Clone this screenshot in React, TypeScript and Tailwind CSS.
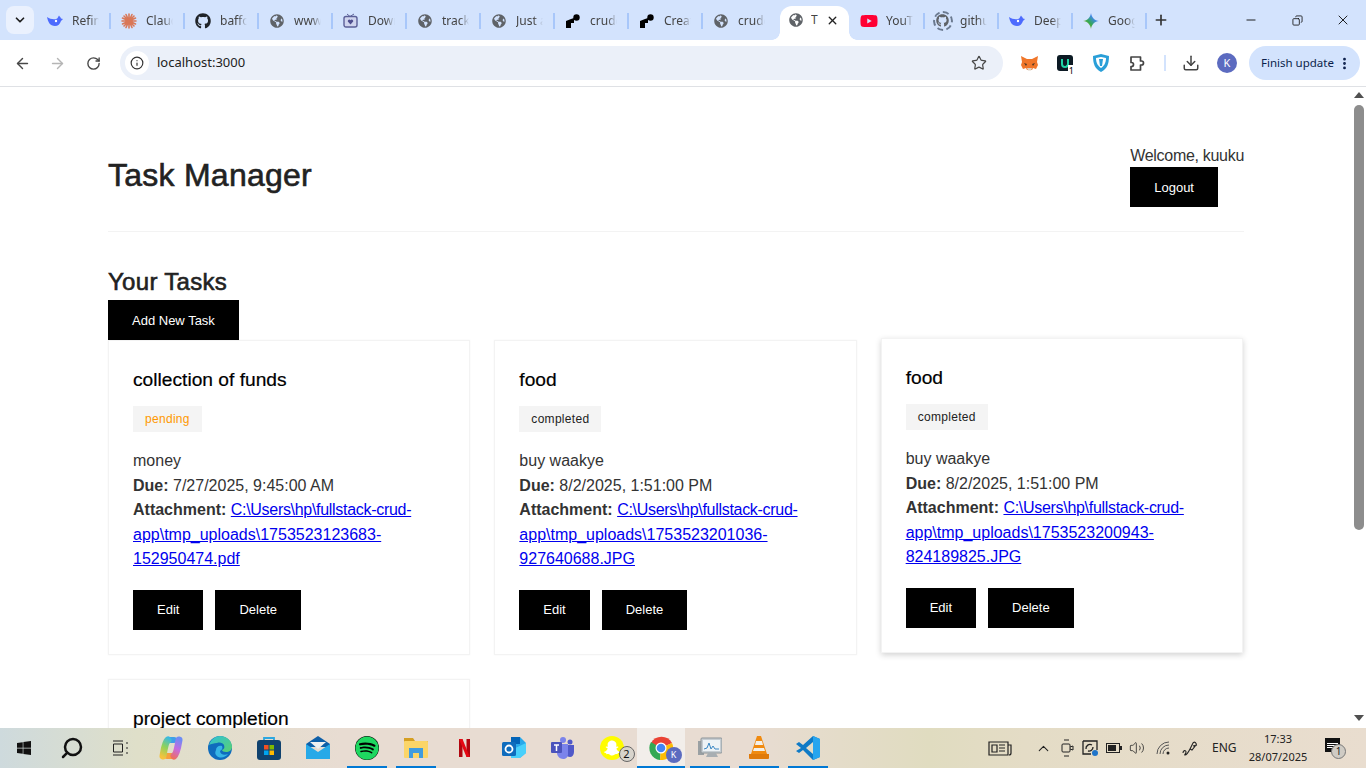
import {
  ArrowLeft,
  ArrowRight,
  ChevronDown,
  ChevronUp,
  Copy,
  Download,
  Info,
  Minus,
  MoreVertical,
  Plus,
  RotateCw,
  Search,
  Star,
  Volume2,
  X,
} from 'lucide-react'
import type { ReactNode } from 'react'
import { FaGithub, FaGlobeAmericas, FaSnapchatGhost, FaSpotify, FaWindows, FaYoutube } from 'react-icons/fa'

const Globe = () => <FaGlobeAmericas className="text-[#5f6368]" size={14} />

const Whale = () => (
  <svg width="17" height="14" viewBox="0 0 17 14">
    <path d="M1 3c1 5 3 9 8 9 3 0 5-2 6-5l2-2-2-.5c-.5-1.500-1.500-2-2-3-1 1-1 3-3 3.500C7 5.500 4 5 1 3z" fill="#4d6bfe" />
    <circle cx="10" cy="7" r="1.200" fill="#fff" />
  </svg>
)

const Claude = () => (
  <svg width="16" height="16" viewBox="0 0 16 16" stroke="#d97757" strokeWidth="1.600" strokeLinecap="round">
    <path d="M8 1v14M1 8h14M3 3l10 10M13 3L3 13M5 1.500l6 13M11 1.500l-6 13M1.500 5l13 6M14.500 5l-13 6" />
  </svg>
)

const TvIcon = () => (
  <svg width="15" height="15" viewBox="0 0 15 15">
    <path d="M4 1l3 2.500L11 1" stroke="#5b5f97" fill="none" />
    <rect x="1" y="3.500" width="13" height="10.500" rx="2" fill="#cfd4ee" stroke="#5b5f97" strokeWidth="1.400" />
    <path d="M7.500 11.500L4.800 8.500a1.500 1.500 0 0 1 2.700-1.200 1.500 1.500 0 0 1 2.700 1.200z" fill="#4f4f8f" />
  </svg>
)

const Crude = () => (
  <svg width="14" height="14" viewBox="0 0 14 14">
    <path d="M0 7l5-2v9H0z M5 5l3-1v5H5z" fill="#000" />
    <circle cx="10.500" cy="3.500" r="3.200" fill="#000" />
  </svg>
)

const GithubRing = () => (
  <span className="flex h-[20px] w-[20px] items-center justify-center rounded-full border-2 border-dashed border-[#6b7a90]">
    <FaGithub className="text-[#5f6368]" size={13} />
  </span>
)

const Gemini = () => (
  <svg width="16" height="16" viewBox="0 0 16 16">
    <defs>
      <linearGradient id="gem" x1="0" y1="1" x2="1" y2="0">
        <stop offset="0" stopColor="#f4b400" />
        <stop offset="0.4" stopColor="#34a853" />
        <stop offset="0.7" stopColor="#4285f4" />
        <stop offset="1" stopColor="#e8453c" />
      </linearGradient>
    </defs>
    <path d="M8 0c.6 4.500 3.500 7.400 8 8-4.500.6-7.400 3.500-8 8-.6-4.500-3.500-7.400-8-8 4.500-.6 7.400-3.500 8-8z" fill="url(#gem)" />
  </svg>
)

const tabs: { title: string; icon: ReactNode; active?: boolean }[] = [
  { title: 'Refine', icon: <Whale /> },
  { title: 'Claude', icon: <Claude /> },
  { title: 'baffour', icon: <FaGithub className="text-[#1f2328]" size={16} /> },
  { title: 'www.de', icon: <Globe /> },
  { title: 'Downlo', icon: <TvIcon /> },
  { title: 'tracking', icon: <Globe /> },
  { title: 'Just a m', icon: <Globe /> },
  { title: 'crude a', icon: <Crude /> },
  { title: 'Create', icon: <Crude /> },
  { title: 'crude a', icon: <Globe /> },
  { title: 'T', icon: <Globe />, active: true },
  { title: 'YouTube', icon: <FaYoutube className="text-[#ff0033]" size={18} /> },
  { title: 'github', icon: <GithubRing /> },
  { title: 'DeepSe', icon: <Whale /> },
  { title: 'Google', icon: <Gemini /> },
]

function TabStrip() {
  return (
    <div className="flex h-10 items-end bg-[#d3e3fd] font-['Noto_Sans',sans-serif]">
      <button className="mb-[6px] ml-[6px] flex h-7 w-7 items-center justify-center rounded-lg bg-[#eaf1fe]">
        <ChevronDown size={14} strokeWidth={3} className="text-[#1f1f1f]" />
      </button>
      <div className="ml-[3px] flex h-full items-center">
        {tabs.map((tab, i) =>
          tab.active ? (
            <div key={i} className="relative mx-[2px] flex h-[34px] w-[69px] items-center self-end rounded-t-xl bg-white pb-[6px] pl-[9px]">
              <span className="absolute bottom-0 left-[-8px] h-2 w-2 bg-[radial-gradient(circle_at_0_0,#d3e3fd_7.5px,#fff_8px)]" />
              <span className="absolute bottom-0 right-[-8px] h-2 w-2 bg-[radial-gradient(circle_at_100%_0,#d3e3fd_7.5px,#fff_8px)]" />
              <Globe />
              <span className="ml-2 w-[9px] overflow-hidden text-xs text-[#444]">{tab.title}</span>
              <X size={13} strokeWidth={2.5} className="ml-[6px] text-[#222]" />
            </div>
          ) : (
            <div key={i} className={`flex h-full w-[74px] items-center pt-[1px] ${i === 9 ? 'mr-[1px]' : ''}`}>
              <span className="flex w-[35px] shrink-0 justify-center">{tab.icon}</span>
              <span className="w-[27px] overflow-hidden whitespace-nowrap text-xs text-[#444] [mask-image:linear-gradient(90deg,#000_65%,transparent)]">
                {tab.title}
              </span>
              {i !== 9 && <span className="ml-auto h-4 w-[2px] bg-[#a8c7fa]" />}
            </div>
          ),
        )}
      </div>
      <div className="flex h-full items-center">
        <Plus size={16} strokeWidth={2.5} className="ml-[6px] text-[#333]" />
      </div>
      <div className="ml-auto flex h-full items-center text-[#111]">
        <span className="flex w-[46px] justify-center"><Minus size={14} strokeWidth={1.6} /></span>
        <span className="flex w-[46px] justify-center"><Copy size={11} strokeWidth={1.800} className="-scale-x-100" /></span>
        <span className="flex w-[46px] justify-center"><X size={16} strokeWidth={1.400} /></span>
      </div>
    </div>
  )
}

const Fox = () => (
  <svg width="17" height="16" viewBox="0 0 17 16">
    <path d="M0 1l6 3h5l6-3-1 6 1 3-2 4-3-1-1 2H6l-1-2-3 1-2-4 1-3z" fill="#f0762a" />
    <path d="M3 8l3 1-1 2zM14 8l-3 1 1 2z" fill="#4a3626" />
    <path d="M6 13h5l-1 2.500H7z" fill="#e0d2c4" />
  </svg>
)

const Shield = () => (
  <svg width="16" height="18" viewBox="0 0 16 18">
    <path d="M8 0l8 2c0 8-2 13-8 16C2 15 0 10 0 2z" fill="#2a9fd8" />
    <path d="M8 3l5 1c0 5-2 8-5 10C5 12 3 9 3 4z" fill="#fff" />
    <path d="M6 5h4l-1 7H7z" fill="#2a9fd8" />
  </svg>
)

const PuzzlePiece = () => (
  <svg className="ml-[20px]" width="17" height="17" viewBox="0 0 17 17" fill="none" stroke="#444" strokeWidth="1.700" strokeLinejoin="round">
    <path d="M2 2h9.500v4h1a2 2 0 0 1 0 4h-1v5H2v-3.500h.500a2 2 0 0 0 0-4H2z" />
  </svg>
)

function Toolbar() {
  return (
    <div className="flex h-[47px] shrink-0 items-center rounded-t-lg border-b border-[#dfe1e5] bg-white font-['Noto_Sans',sans-serif]">
      <ArrowLeft size={17} className="ml-[14px] text-[#474747]" />
      <ArrowRight size={17} className="ml-[18px] text-[#b5b5b5]" />
      <RotateCw size={15} strokeWidth={2.2} className="ml-[20px] text-[#474747]" />
      <div className="ml-[19px] flex h-[34px] w-[883px] items-center rounded-full bg-[#ebf0f9] pl-[5px]">
        <span className="flex h-6 w-6 items-center justify-center rounded-full bg-white">
          <Info size={14} strokeWidth={2} className="text-[#333]" />
        </span>
        <span className="ml-2 text-[13px] text-[#222]">localhost:3000</span>
        <Star size={16} strokeWidth={1.800} className="ml-auto mr-[16px] text-[#474747]" />
      </div>
      <div className="ml-[18px] flex w-[17px] justify-center"><Fox /></div>
      <div className="relative ml-[19px] flex h-4 w-4 items-center justify-center rounded-[3px] bg-[#0c1a24]">
        <span className="h-[9px] w-2 rounded-b-sm border-x-2 border-b-2 border-[#21d3a4]" />
        <span className="absolute -bottom-[5px] -right-[2px] bg-white px-[1px] text-[9px] leading-[11px] text-black">1</span>
      </div>
      <div className="ml-[20px] flex w-4 justify-center"><Shield /></div>
      <PuzzlePiece />
      <span className="ml-[18px] h-[16px] w-[2px] bg-[#d3e3fd]" />
      <Download size={18} strokeWidth={2} className="ml-[16px] text-[#444]" />
      <span className="ml-[17px] flex h-5 w-5 items-center justify-center rounded-full bg-[#5c6bc0] text-[11px] text-white">K</span>
      <div className="ml-[12px] flex h-[34px] w-[111px] items-center rounded-full bg-[#d3e3fd] pl-3 text-[11.5px] whitespace-nowrap text-[#0b1f4b]">
        Finish update
        <MoreVertical size={15} strokeWidth={2.500} className="ml-auto mr-2 text-[#0b1f4b]" />
      </div>
    </div>
  )
}

type Task = {
  title: string
  status: string
  description: string
  due: string
  path: string[]
  hovered?: boolean
}

const taskList: Task[] = [
  {
    title: 'collection of funds',
    status: 'pending',
    description: 'money',
    due: '7/27/2025, 9:45:00 AM',
    path: ['C:\\Users\\hp\\fullstack-crud-', 'app\\tmp_uploads\\1753523123683-152950474.pdf'],
  },
  {
    title: 'food',
    status: 'completed',
    description: 'buy waakye',
    due: '8/2/2025, 1:51:00 PM',
    path: ['C:\\Users\\hp\\fullstack-crud-', 'app\\tmp_uploads\\1753523201036-927640688.JPG'],
  },
  {
    title: 'food',
    status: 'completed',
    description: 'buy waakye',
    due: '8/2/2025, 1:51:00 PM',
    path: ['C:\\Users\\hp\\fullstack-crud-', 'app\\tmp_uploads\\1753523200943-824189825.JPG'],
    hovered: true,
  },
  {
    title: 'project completion',
    status: 'pending',
    description: 'finish the app',
    due: '7/30/2025, 5:00:00 PM',
    path: ['C:\\Users\\hp\\fullstack-crud-', 'app\\tmp_uploads\\1753523300000-100000000.pdf'],
  },
]

function ActionButton({ children }: { children: ReactNode }) {
  return <button className="h-10 bg-black px-6 pt-[1px] text-[13px] text-white">{children}</button>
}

function TaskCard({ task }: { task: Task }) {
  return (
    <div
      className={`border border-[#f3f3f3] bg-white p-6 ${
        task.hovered ? '-translate-y-0.5 shadow-[0_2px_6px_rgba(0,0,0,0.18)]' : 'shadow-[0_0_2px_rgba(0,0,0,0.04)]'
      }`}
    >
      <h3 className="text-[19.2px] leading-[29px] text-black [-webkit-text-stroke:0.2px_#000]">{task.title}</h3>
      <span
        className={`mt-[12px] inline-block h-[26px] bg-[#f4f4f4] px-3 text-xs leading-[26px] tracking-[0.3px] ${
          task.status === 'pending' ? 'text-[#ff9800]' : 'text-[#222]'
        }`}
      >
        {task.status}
      </span>
      <div className="mt-[17px] text-base leading-[24.5px] text-[#333]">
        <p>{task.description}</p>
        <p>
          <strong>Due:</strong> {task.due}
        </p>
        <p>
          <strong>Attachment:</strong>{' '}
          <a href="#" className="break-words text-[#0000ee] underline">
            <span className="tracking-[-0.3px]">{task.path[0]}</span>
            {task.path[1]}
          </a>
        </p>
      </div>
      <div className="mt-[18px] flex gap-3">
        <ActionButton>Edit</ActionButton>
        <ActionButton>Delete</ActionButton>
      </div>
    </div>
  )
}

function Page() {
  return (
    <div className="flex min-h-0 flex-1 overflow-hidden bg-white font-['Liberation_Sans',Arial,sans-serif] text-[#222]">
      <main className="min-w-0 flex-1 overflow-hidden pl-[108px] pr-[107px] pt-[56px]">
        <header className="flex items-center justify-between border-b border-[#f3f3f3] pb-6">
          <h1 className="text-[32px] leading-[40px] tracking-[0.25px] [-webkit-text-stroke:0.6px_#222]">Task Manager</h1>
          <div className="whitespace-nowrap leading-6">
            <p className="pt-[1px] leading-[23px] tracking-[-0.3px] text-[#333]">Welcome, kuuku</p>
            <ActionButton>Logout</ActionButton>
          </div>
        </header>
        <h2 className="mt-[32px] text-2xl leading-9 tracking-[0.3px] [-webkit-text-stroke:0.6px_#222]">Your Tasks</h2>
        <ActionButton>Add New Task</ActionButton>
        <div className="mr-[1px] grid grid-cols-3 items-start gap-6">
          {taskList.map((task, i) => (
            <TaskCard key={i} task={task} />
          ))}
        </div>
      </main>
      <div className="flex w-[15px] shrink-0 flex-col items-center bg-white pt-[5px]">
        <span className="h-0 w-0 border-x-[5px] border-b-[6px] border-x-transparent border-b-[#505050]" />
        <span className="mt-[7px] h-[425px] w-[10px] rounded-full bg-[#8d8d8d]" />
        <span className="mb-[7px] mt-auto h-0 w-0 border-x-[5px] border-t-[6px] border-x-transparent border-t-[#505050]" />
      </div>
    </div>
  )
}

const Copilot = () => (
  <svg width="26" height="24" viewBox="0 0 26 24" fill="none" strokeLinecap="round">
    <defs>
      <linearGradient id="cpa" gradientUnits="userSpaceOnUse" x1="14" y1="3" x2="4" y2="21">
        <stop offset="0" stopColor="#35b8e8" />
        <stop offset="0.5" stopColor="#8fd25a" />
        <stop offset="1" stopColor="#f6c23c" />
      </linearGradient>
      <linearGradient id="cpb" gradientUnits="userSpaceOnUse" x1="22" y1="3" x2="12" y2="21">
        <stop offset="0" stopColor="#6d8cf5" />
        <stop offset="0.5" stopColor="#c56be0" />
        <stop offset="1" stopColor="#f0705a" />
      </linearGradient>
    </defs>
    <path d="M10 4h6" stroke="#3f9fe8" strokeWidth="6" />
    <path d="M15 20h-6" stroke="#f6a03c" strokeWidth="6" />
    <path d="M10 4C7 6 6 14 5 20" stroke="url(#cpa)" strokeWidth="7" />
    <path d="M21 4c-1 6-2 14-5 16" stroke="url(#cpb)" strokeWidth="7" />
  </svg>
)

const Edge = () => (
  <svg width="24" height="24" viewBox="0 0 24 24">
    <defs>
      <linearGradient id="edg" x1="0" y1="0" x2="1" y2="1">
        <stop offset="0" stopColor="#2fc1d8" />
        <stop offset="1" stopColor="#5bd16f" />
      </linearGradient>
    </defs>
    <circle cx="12" cy="12" r="12" fill="#0f6cbd" />
    <path d="M1 9C3 3 8 0 12 0c7 0 12 5 12 11 0 3-3 5-6 5-2 0-4-1-4-2 2-1 3-2 2-5-1-2-4-3-7-2-3 0-6 1-8 2z" fill="url(#edg)" />
    <path d="M8 14c0-3 3-5 6-4 1 2 0 4-2 5 0 3 4 5 8 3-3 4-9 5-12 1-1-1-1-3 0-5z" fill="#36b5e5" />
  </svg>
)

const Store = () => (
  <svg width="24" height="24" viewBox="0 0 24 24">
    <path d="M7 5V2h10v3" fill="none" stroke="#2ba7e0" strokeWidth="1.800" />
    <rect y="4" width="24" height="20" rx="3" fill="#10426f" />
    <rect x="7" y="9" width="4.500" height="4.500" fill="#f25022" />
    <rect x="12.500" y="9" width="4.500" height="4.500" fill="#7fba00" />
    <rect x="7" y="14.500" width="4.500" height="4.500" fill="#00a4ef" />
    <rect x="12.500" y="14.500" width="4.500" height="4.500" fill="#ffb900" />
  </svg>
)

const Mail = () => (
  <svg width="24" height="23" viewBox="0 0 24 23">
    <path d="M0 8L12 0l12 8v3H0z" fill="#0e5fa8" />
    <path d="M4 6h16l-8 7z" fill="#f1f1f1" />
    <path d="M0 8l12 8 12-8v15H0z" fill="#27a9e8" />
  </svg>
)

const Files = () => (
  <svg width="24" height="20" viewBox="0 0 24 20">
    <path d="M0 0h9l2 3h13v5H0z" fill="#d59f22" />
    <rect y="3" width="24" height="17" rx="1" fill="#fbd568" />
    <path d="M5 10h14v10h-4v-5H9v5H5z" fill="#3f9ce0" />
  </svg>
)

const Netflix = () => (
  <svg width="11" height="18" viewBox="0 0 11 18">
    <path d="M0 0h3.500v18L0 18.500z" fill="#b1060f" />
    <path d="M7.500 0H11v18.500L7.500 18z" fill="#b1060f" />
    <path d="M0 0h3.500L11 18.500 7.500 18z" fill="#e50914" />
  </svg>
)

const Outlook = () => (
  <svg width="24" height="24" viewBox="0 0 24 24">
    <path d="M9 1h9l6 6v10l-6 5H9z" fill="#28a8ea" />
    <path d="M9 1h9v7H9z" fill="#0364b8" />
    <path d="M9 14l15-7v10l-6 5H9z" fill="#50d9ff" opacity="0.8" />
    <rect y="6" width="14" height="14" rx="1.500" fill="#0f6cbd" />
    <circle cx="7" cy="13" r="3.500" fill="none" stroke="#fff" strokeWidth="1.800" />
  </svg>
)

const Teams = () => (
  <svg width="23" height="22" viewBox="0 0 23 22">
    <circle cx="12" cy="3" r="3" fill="#7b83eb" />
    <circle cx="19" cy="5" r="2.500" fill="#5059c9" />
    <path d="M15 8h8v7c0 3-2 5-4 5s-4-1-4-3z" fill="#5059c9" />
    <path d="M6 7h11v10c0 3-2 5-5 5s-6-3-6-6z" fill="#7b83eb" />
    <rect y="5" width="11" height="11" rx="1" fill="#4b53bc" />
    <path d="M3 8h5M5.500 8v6" stroke="#fff" strokeWidth="1.500" />
  </svg>
)

const Chrome = () => (
  <svg width="24" height="24" viewBox="0 0 24 24">
    <path d="M12 12L2 7a12 12 0 0 1 21 0z" fill="#ea4335" />
    <path d="M12 12L2 6a12 12 0 0 0 9 18z" fill="#34a853" />
    <path d="M12 12l11-5a12 12 0 0 1-12 17z" fill="#fbbc05" />
    <circle cx="12" cy="12" r="5.500" fill="#fff" />
    <circle cx="12" cy="12" r="4.300" fill="#4285f4" />
  </svg>
)

const Monitor = () => (
  <svg width="24" height="22" viewBox="0 0 24 22">
    <rect x="0" y="4" width="6" height="14" fill="#9aa0a3" />
    <rect x="3" y="1" width="21" height="15" rx="1" fill="#c6cdd2" stroke="#8d9498" />
    <rect x="5" y="3" width="17" height="11" fill="#eef3f6" />
    <path d="M6 12l3-1 2-5 2 6 2-3 2 3h4" fill="none" stroke="#3c88c4" />
    <path d="M10 16h8l2 4H8z" fill="#a8aeb2" />
  </svg>
)

const Vlc = () => (
  <svg width="20" height="23" viewBox="0 0 20 23">
    <path d="M8 0h4l6 18H2z" fill="#f08a10" />
    <path d="M7 5h6l1 4H6zM5 12h10l1 3H4z" fill="#f4f0e8" />
    <path d="M0 18h20v4a1 1 0 0 1-1 1H1a1 1 0 0 1-1-1z" fill="#e07a0a" />
  </svg>
)

const VsCode = () => (
  <svg width="24" height="24" viewBox="0 0 24 24">
    <path d="M17 0l7 3v18l-7 3-10-10-4 3-3-2 5-3-5-4 3-2 4 3z" fill="#0e7ac6" />
    <path d="M17 0l7 3v18l-7 3z" fill="#27a5ee" />
    <path d="M17 6v12l-7-6z" fill="#e3dcc8" />
  </svg>
)

const taskbarApps: { icon: ReactNode; open?: boolean; active?: boolean; badge?: string }[] = [
  { icon: <Copilot /> },
  { icon: <Edge /> },
  { icon: <Store /> },
  { icon: <Mail /> },
  { icon: <FaSpotify size={24} className="rounded-full bg-black text-[#1ed760]" />, open: true },
  { icon: <Files />, open: true },
  { icon: <Netflix /> },
  { icon: <Outlook /> },
  { icon: <Teams /> },
  {
    icon: (
      <span className="flex h-6 w-6 items-center justify-center rounded-full bg-[#fffc00]">
        <FaSnapchatGhost size={16} className="text-white" />
      </span>
    ),
    badge: '2',
  },
  { icon: <Chrome />, open: true, active: true },
  { icon: <Monitor />, open: true },
  { icon: <Vlc />, open: true },
  { icon: <VsCode />, open: true },
]

function Taskbar() {
  return (
    <div className="flex h-10 shrink-0 items-stretch bg-[linear-gradient(90deg,#cedadd_0%,#dfdfc9_10%,#e8dcd2_25%,#e8dcd2_55%,#e0dcc0_68%,#e4dcc6_75%,#e9ddcf_100%)] font-['Noto_Sans',sans-serif] text-[#111]">
      <span className="flex w-12 items-center justify-center"><FaWindows size={16} /></span>
      <span className="flex w-12 items-center justify-center"><Search size={24} strokeWidth={2.5} className="-scale-x-100" /></span>
      <span className="flex w-12 items-center justify-center">
        <svg width="17" height="16" viewBox="0 0 17 16" fill="none" stroke="#222">
          <path d="M1 1h10M1 15h10M1.500 4h9v8h-9zM15 2v2M15 7v2M15 12v2" />
        </svg>
      </span>
      <div className="ml-[2px] flex">
        {taskbarApps.map((app, i) => (
          <div
            key={i}
            className={`relative flex items-center justify-center pb-[1px] ${app.active ? 'mx-[0.5px] w-12 bg-[#f2eeea]' : 'mx-[4.5px] w-10'}`}
          >
            {app.icon}
            {app.badge && (
              <span className="absolute right-[-3px] top-[18px] flex h-4 w-4 items-center justify-center rounded-full border border-[#666] bg-[#d8d4cc] text-[11px]">
                {app.badge}
              </span>
            )}
            {app.active && (
              <span className="absolute bottom-[5px] right-[3px] flex h-4 w-4 items-center justify-center rounded-full bg-[#5c6bc0] text-[9px] text-white">
                K
              </span>
            )}
            {app.open && <span className="absolute inset-x-0 bottom-0 h-[2px] bg-[#0078d4]" />}
          </div>
        ))}
      </div>
      <div className="ml-auto flex items-center text-[#222]">
        <svg width="24" height="15" viewBox="0 0 24 15" fill="none" stroke="#222" strokeWidth="1.200">
          <path d="M1 1h19v13H1zM20 4h3v8a2 2 0 0 1-2 2M4 4h5v7H4zM11 4h6M11 7h6M11 10h6" />
        </svg>
        <ChevronUp size={17} strokeWidth={1.500} className="ml-[23px]" />
        <svg className="ml-[9px]" width="13" height="18" viewBox="0 0 13 18" fill="none" stroke="#222">
          <rect x="1" y="5" width="8" height="8" rx="1" />
          <path d="M9 8l3-1v4l-3-1M3 1h5M3 17h5" />
        </svg>
        <svg className="ml-[8px]" width="16" height="16" viewBox="0 0 16 16" fill="none" stroke="#222" strokeWidth="1.300">
          <path d="M1 1h14v9M1 1v13h8" />
          <path d="M4 9a4 4 0 0 1 6-4M11 7a4 4 0 0 1-5 4" />
          <circle cx="13" cy="13" r="3" fill="#1f74c9" stroke="none" />
        </svg>
        <svg className="ml-[8px]" width="17" height="10" viewBox="0 0 17 10">
          <rect x="0.500" y="0.500" width="13" height="9" fill="none" stroke="#222" />
          <rect x="2" y="2" width="8" height="6" fill="#222" />
          <rect x="14" y="3" width="2" height="4" fill="#222" />
        </svg>
        <Volume2 size={16} strokeWidth={1.200} className="ml-[6px]" />
        <svg className="ml-[11px]" width="16" height="14" viewBox="0 0 16 14" fill="none" stroke="#555">
          <path d="M1 13A12 12 0 0 1 13 1M4 13a9 9 0 0 1 9-9M7 13a6 6 0 0 1 6-6" />
          <circle cx="12" cy="12" r="1.500" fill="#222" stroke="none" />
        </svg>
        <svg className="ml-[10px]" width="17" height="16" viewBox="0 0 17 16" fill="none" stroke="#222" strokeWidth="1.100">
          <path d="M1 13c0-3 3-3 3-1s-2 3-1 3 3-2 5-6l3-6c1-2 4 0 3 2l-4 5-2-1M11 6l4-1" />
        </svg>
        <span className="ml-[13px] w-[24px] text-xs">ENG</span>
        <div className="ml-[9px] w-[66px] text-center text-[11px] leading-[18px]">
          <p>17:33</p>
          <p>28/07/2025</p>
        </div>
        <div className="relative ml-[14px] mr-[21px] h-5 w-5">
          <span className="absolute left-0 top-0 flex h-[14px] w-[15px] flex-col justify-center gap-[1px] bg-[#111] px-[2px]">
            <i className="h-px bg-white" />
            <i className="h-px bg-white" />
            <i className="h-px bg-white" />
          </span>
          <span className="absolute left-[6px] top-[6px] flex h-[15px] w-[15px] items-center justify-center rounded-full border border-[#777] bg-[#cfcbc4] text-[10px] not-italic">
            1
          </span>
        </div>
      </div>
    </div>
  )
}

export default function App() {
  return (
    <div className="flex h-screen flex-col overflow-hidden">
      <TabStrip />
      <Toolbar />
      <Page />
      <Taskbar />
    </div>
  )
}
